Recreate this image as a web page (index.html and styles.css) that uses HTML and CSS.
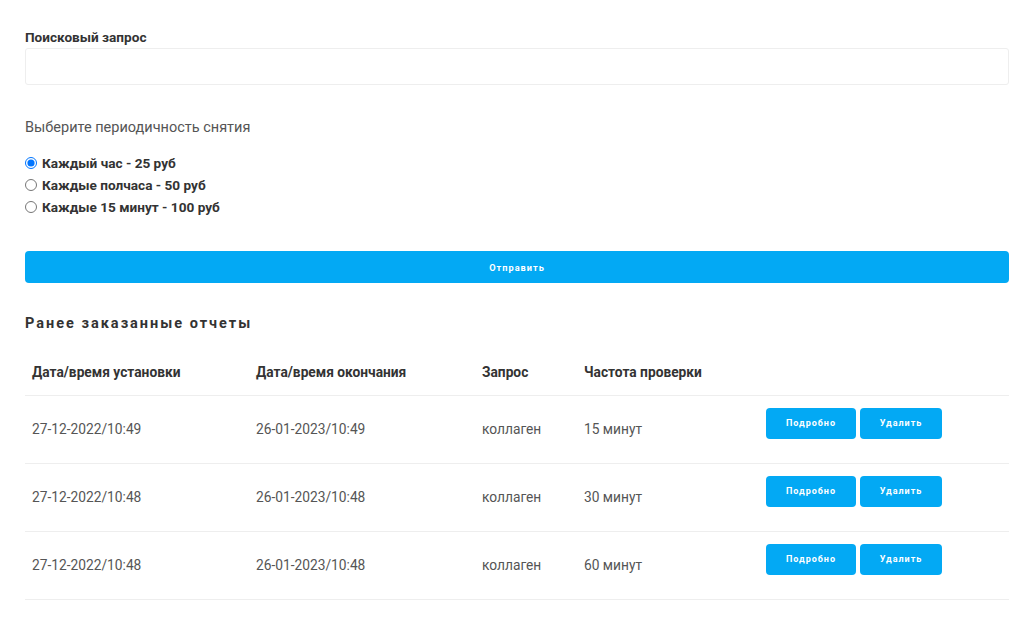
FILE: index.html
```html
<!DOCTYPE html>
<html lang="ru">
<head>
<meta charset="utf-8">
<title>Отчеты</title>
<link rel="stylesheet" href="styles.css">
</head>
<body>
<div class="page">
  <form class="form">
    <label class="field-label" for="q">Поисковый запрос</label>
    <input class="field-input" id="q" type="text">
    <p class="period-title">Выберите периодичность снятия</p>
    <div class="radios">
      <label class="radio"><input type="radio" name="p" checked> <span>Каждый час - 25 руб</span></label>
      <label class="radio"><input type="radio" name="p"> <span>Каждые полчаса - 50 руб</span></label>
      <label class="radio"><input type="radio" name="p"> <span>Каждые 15 минут - 100 руб</span></label>
    </div>
    <button type="button" class="btn btn-wide">Отправить</button>
  </form>

  <h2 class="section-title">Ранее заказанные отчеты</h2>
  <table class="reports">
    <colgroup>
      <col class="c1"><col class="c2"><col class="c3"><col class="c4"><col class="c5">
    </colgroup>
    <thead>
      <tr><th>Дата/время установки</th><th>Дата/время окончания</th><th>Запрос</th><th>Частота проверки</th><th></th></tr>
    </thead>
    <tbody>
      <tr><td>27-12-2022/10:49</td><td>26-01-2023/10:49</td><td>коллаген</td><td>15 минут</td><td class="actions"><button class="btn btn-sm btn-more">Подробно</button><button class="btn btn-sm btn-del">Удалить</button></td></tr>
      <tr><td>27-12-2022/10:48</td><td>26-01-2023/10:48</td><td>коллаген</td><td>30 минут</td><td class="actions"><button class="btn btn-sm btn-more">Подробно</button><button class="btn btn-sm btn-del">Удалить</button></td></tr>
      <tr><td>27-12-2022/10:48</td><td>26-01-2023/10:48</td><td>коллаген</td><td>60 минут</td><td class="actions"><button class="btn btn-sm btn-more">Подробно</button><button class="btn btn-sm btn-del">Удалить</button></td></tr>
    </tbody>
  </table>
</div>
</body>
</html>
```

FILE: styles.css
```css
* { box-sizing: border-box; }
html, body { margin: 0; padding: 0; background: #fff; }
body { font-family: Roboto, "Noto Sans", sans-serif; color: #555; }
.page { padding: 29px 15px 0 25px; }
.form { display: flex; flex-direction: column; }
.field-label { font-size: 13.6px; font-weight: 700; color: #333; line-height: 16px; }
.field-input { display: block; width: 100%; height: 37px; margin-top: 3px; border: 1px solid #eeeeee; border-radius: 3px; background: #fff; font: inherit; padding: 0 10px; }
.period-title { margin: 34px 0 0; font-size: 14.5px; line-height: 18px; color: #555; }
.radios { margin-top: 15px; display: flex; flex-direction: column; }
.radio { display: flex; align-items: center; height: 22px; font-size: 13.6px; font-weight: 700; color: #333; }
.radio input { margin: 0 5px 0 0; width: 12px; height: 12px; }
.btn { border: 0; background: #03a9f4; color: #fff; font-family: Roboto, sans-serif; font-weight: 700; font-size: 9px; letter-spacing: 1px; cursor: pointer; }
.btn-wide { margin-top: 33px; width: 100%; height: 32px; border-radius: 4px; font-size: 9.2px; }
.section-title { margin: 32px 0 0; font-size: 14.5px; font-weight: 700; letter-spacing: 2px; color: #333; line-height: 18px; }
.reports { margin-top: 17px; width: 100%; border-collapse: collapse; table-layout: fixed; }
.c1 { width: 224px; } .c2 { width: 226px; } .c3 { width: 102px; } .c4 { width: 182px; }
.reports th { text-align: left; font-size: 13.75px; font-weight: 700; color: #333; height: 45px; padding: 0 7px; vertical-align: middle; border-bottom: 1px solid #eeeeee; }
.reports td { font-size: 13.75px; color: #555; height: 68px; padding: 0 7px; vertical-align: middle; border-bottom: 1px solid #eeeeee; }
.reports td.actions { padding: 0 7px 12px; }
.btn-sm { height: 31px; border-radius: 4px; vertical-align: middle; }
.btn-more { width: 90px; }
.btn-del { width: 82px; margin-left: 4px; }
```
